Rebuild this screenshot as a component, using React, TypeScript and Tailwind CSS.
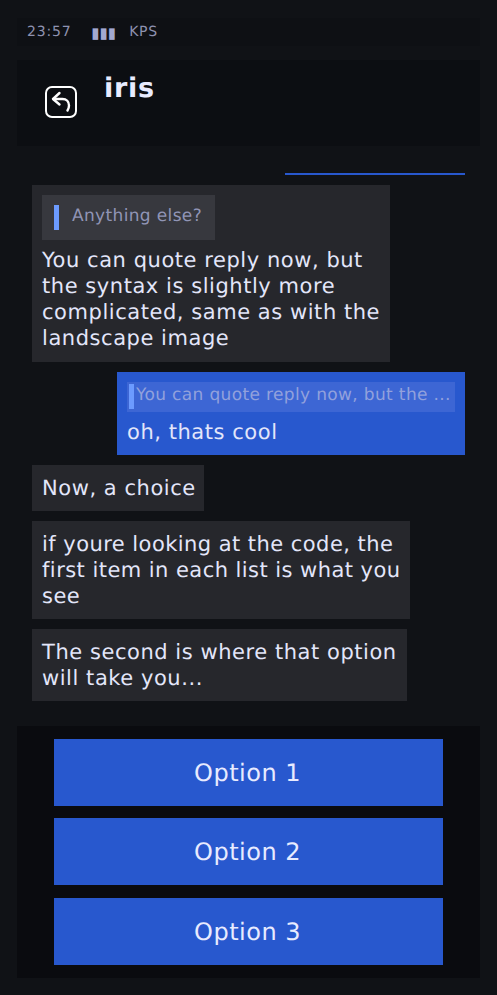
const FONT = "font-['DejaVu_Sans',sans-serif]";

function BackIcon() {
  return (
    <svg width="34" height="34" viewBox="0 0 34 34" fill="none" stroke="#ffffff" strokeLinecap="round" strokeLinejoin="round" aria-hidden>
      <rect x="2" y="2" width="30" height="30" rx="6" strokeWidth="2" />
      <path d="M15.5 8 L9 14 L15.5 19.5" strokeWidth="2.4" />
      <path d="M9.5 14 H18.5 C22.5 14 25 17 25 20.5 C25 22.5 24.5 24 23.5 25.5" strokeWidth="2.4" />
    </svg>
  );
}

function Option({ label }: { label: string }) {
  return (
    <div className="flex h-[67px] w-[389px] shrink-0 items-center justify-center bg-[#2858ce] pr-[2px] pt-[1px] text-[24px] tracking-[0.5px] text-[#e8ebff]">
      {label}
    </div>
  );
}

export default function App() {
  return (
    <div className={`${FONT} flex h-[995px] w-[497px] flex-col overflow-hidden bg-[#101216] px-[17px] pt-[18px] [text-rendering:geometricPrecision]`}>
      <div className="flex h-[28px] shrink-0 items-center bg-[#0e1014] pl-[10px] pt-[1px] text-[14px] tracking-[0.8px] text-[#8e92b0]">
        <span>23:57</span>
        <span className="ml-[20px] text-[15px] leading-[20px] tracking-[0px] text-[#a3a9d0]">▮▮▮</span>
        <span className="ml-[13px]">KPS</span>
      </div>

      <div className="mt-[14px] flex h-[86px] shrink-0 bg-[#0c0e12] pl-[27px]">
        <div className="mt-[25px]">
          <BackIcon />
        </div>
        <div className="ml-[26px] mt-[10px] text-[27px] font-bold leading-[38px] tracking-[0.7px] text-[#e8ebff]">iris</div>
      </div>

      <div className="mt-[27px] ml-[268px] h-[2px] w-[180px] shrink-0 bg-[#2858ce]" />

      <div className="mt-[10px] flex shrink-0 flex-col px-[15px] text-[21px] leading-[26px] tracking-[0.55px] text-[#e3e6fa]">
        <div className="w-[358px] bg-[#26272c] px-[10px] pb-[11px] pt-[10px]">
          <div className="flex h-[45px] w-[173px] items-start bg-[#37383e] pl-[12px] pt-[10px]">
            <span className="h-[25px] w-[5px] bg-[#6c9bff]" />
            <span className="ml-[13px] pt-[1px] text-[17px] leading-[21px] tracking-[0.35px] text-[#9195b6]">Anything else?</span>
          </div>
          <div className="mt-[7px] whitespace-nowrap">
            You can quote reply now, but
            <br />
            the syntax is slightly more
            <br />
            complicated, same as with the
            <br />
            landscape image
          </div>
        </div>

        <div className="ml-[85px] mt-[10px] h-[83px] w-[348px] bg-[#2858ce] px-[10px] pt-[10px]">
          <div className="flex h-[30px] items-start bg-[#3d66d4] pl-[2px] pt-[2px]">
            <span className="h-[25px] w-[5px] shrink-0 bg-[#6c9bff]" />
            <span className="ml-[2px] whitespace-nowrap pt-[1px] text-[17px] leading-[21px] tracking-[0.35px] text-[#92a1dc]">You can quote reply now, but the ...</span>
          </div>
          <div className="mt-[7px]">oh, thats cool</div>
        </div>

        <div className="mt-[10px] w-[172px] whitespace-nowrap bg-[#26272c] px-[10px] py-[10px]">Now, a choice</div>
        <div className="mt-[10px] w-[378px] whitespace-nowrap bg-[#26272c] px-[10px] py-[10px] tracking-[0.45px]">
          if youre looking at the code, the
          <br />
          first item in each list is what you
          <br />
          see
        </div>
        <div className="mt-[10px] w-[375px] bg-[#26272c] px-[10px] py-[10px]">
          The second is where that option will take you...
        </div>
      </div>

      <div className="mt-[25px] flex h-[252px] shrink-0 flex-col items-center bg-[#0a0b0f] pt-[13px]">
        <Option label="Option 1" />
        <div className="mt-[12px]">
          <Option label="Option 2" />
        </div>
        <div className="mt-[13px]">
          <Option label="Option 3" />
        </div>
      </div>
    </div>
  );
}
